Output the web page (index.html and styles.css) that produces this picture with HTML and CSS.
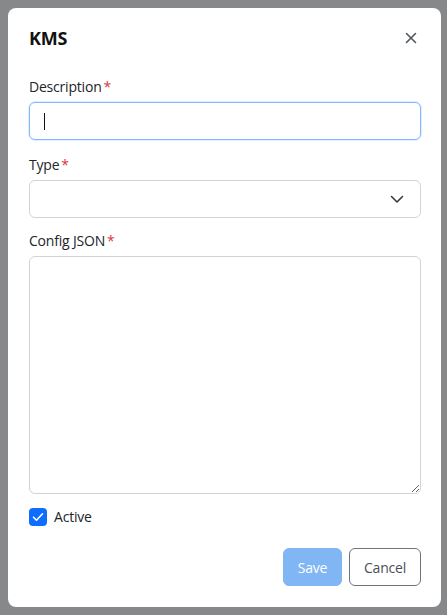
FILE: index.html
```html
<!DOCTYPE html>
<html lang="en">
<head>
<meta charset="utf-8">
<link rel="stylesheet" href="styles.css">
</head>
<body>
<div class="modal">
  <div class="modal-header">
    <h5 class="modal-title">KMS</h5>
    <button class="btn-close" type="button" aria-label="Close">
      <svg width="12" height="12" viewBox="0 0 12 12"><path d="M1.5 1.5 L10.5 10.5 M10.5 1.5 L1.5 10.5" stroke="#51565c" stroke-width="1.6" stroke-linecap="round" fill="none"/></svg>
    </button>
  </div>
  <div class="modal-body">
    <div class="group g-desc">
      <label class="form-label">Description<span class="req">*</span></label>
      <div class="input-wrap">
        <input class="form-control focused" type="text">
        <span class="caret"></span>
      </div>
    </div>
    <div class="group g-type">
      <label class="form-label">Type<span class="req">*</span></label>
      <div class="form-select">
        <svg class="chev" width="14" height="9" viewBox="0 0 14 9"><path d="M1.5 1.5 L7 7 L12.5 1.5" stroke="#343a40" stroke-width="1.6" fill="none" stroke-linecap="round" stroke-linejoin="round"/></svg>
      </div>
    </div>
    <div class="group g-json">
      <label class="form-label">Config JSON<span class="req">*</span></label>
      <textarea class="form-textarea"></textarea>
    </div>
    <div class="check">
      <span class="check-box">
        <svg width="12" height="10" viewBox="0 0 12 10"><path d="M1.5 5.2 L4.5 8.2 L10.5 1.8" stroke="#fff" stroke-width="1.6" fill="none" stroke-linecap="round" stroke-linejoin="round"/></svg>
      </span>
      <span class="check-label">Active</span>
    </div>
  </div>
  <div class="modal-footer">
    <button class="btn btn-save" type="button">Save</button>
    <button class="btn btn-cancel" type="button">Cancel</button>
  </div>
</div>
</body>
</html>
```
FILE: styles.css
```css
* { box-sizing: border-box; }
html, body { margin: 0; padding: 0; }
body {
  background: #87888a;
  font-family: "Open Sans", "Noto Sans", sans-serif;
  color: #212529;
  width: 447px;
  height: 615px;
  overflow: hidden;
}
.modal {
  margin: 8px 6px 8px 8px;
  width: 433px;
  height: 599px;
  background: #fff;
  border-radius: 8px;
  display: flex;
  flex-direction: column;
}
.modal-header {
  height: 60px;
  display: flex;
  align-items: center;
  justify-content: space-between;
  padding: 0 24px 0 21px;
}
.modal-title {
  margin: 0;
  font-size: 18px;
  font-weight: 700;
  line-height: 28px;
  color: #111;
  letter-spacing: -0.2px;
}
.btn-close {
  border: 0;
  background: transparent;
  padding: 0;
  width: 12px;
  height: 12px;
  display: flex;
}
.modal-body {
  padding: 0 20px 0 21px;
  display: flex;
  flex-direction: column;
}
.group { display: flex; flex-direction: column; }
.g-desc { margin-top: 9px; }
.g-type { margin-top: 15px; }
.g-json { margin-top: 13px; }
.form-label {
  font-size: 14px;
  line-height: 20px;
  margin-bottom: 5px;
  color: #212529;
  letter-spacing: -0.2px;
}
.req { color: #dc3545; margin-left: 2px; }
.input-wrap { position: relative; }
.form-control {
  display: block;
  width: 100%;
  height: 38px;
  border: 1px solid #86b7fe;
  border-radius: 6px;
  padding: 0 12px;
  font: inherit;
  outline: none;
  box-shadow: 0 0 0 1px rgba(13,110,253,0.12);
}
.caret {
  position: absolute;
  left: 15px;
  top: 11px;
  width: 1px;
  height: 17px;
  background: #111;
}
.form-select {
  height: 38px;
  border: 1px solid #ced4da;
  border-radius: 6px;
  display: flex;
  align-items: center;
  justify-content: flex-end;
  padding-right: 16px;
}
.form-textarea {
  display: block;
  width: 100%;
  height: 238px;
  border: 1px solid #ced4da;
  border-radius: 6px;
  font: inherit;
  outline: none;
  margin: 0;
  resize: vertical;
}
.check {
  margin-top: 14px;
  display: flex;
  align-items: center;
  gap: 7px;
  height: 18px;
}
.check-box {
  width: 18px;
  height: 18px;
  border-radius: 4px;
  background: #0d6efd;
  display: flex;
  align-items: center;
  justify-content: center;
}
.check-label {
  font-size: 14px;
  line-height: 20px;
  letter-spacing: -0.2px;
}
.modal-footer {
  margin-top: auto;
  padding: 0 20px 21px 21px;
  display: flex;
  justify-content: flex-end;
  gap: 7px;
}
.btn {
  height: 38px;
  border-radius: 6px;
  font-family: inherit;
  font-size: 14px;
  padding: 0 12px;
  letter-spacing: -0.2px;
}
.btn-save {
  width: 59px;
  background: #80b6f4;
  border: 1px solid #80b6f4;
  color: #fff;
}
.btn-cancel {
  width: 72px;
  background: #fff;
  border: 1px solid #6c757d;
  color: #495057;
}
```
